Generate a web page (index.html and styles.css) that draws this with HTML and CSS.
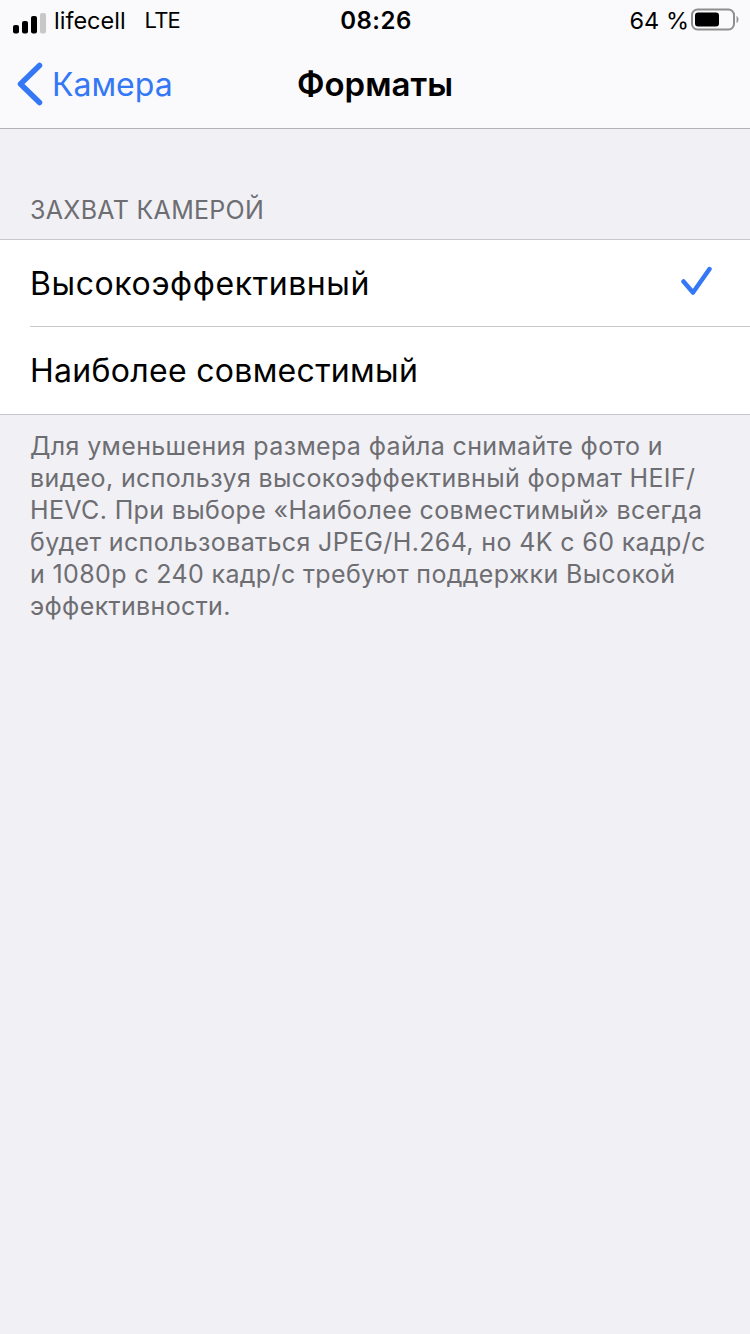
FILE: index.html
```
<!DOCTYPE html>
<html lang="ru">
<head>
<meta charset="utf-8">
<title>Форматы</title>
<link rel="stylesheet" href="styles.css">
</head>
<body>
<header class="top">
  <div class="status">
    <div class="status-left">
      <svg class="signal" width="33" height="32" viewBox="0 0 33 32"><rect x="0" y="21" width="6" height="8.500" rx="2" fill="#000"/><rect x="9" y="17" width="6" height="12.500" rx="2" fill="#000"/><rect x="18" y="12" width="6" height="17.500" rx="2" fill="#000"/><rect x="27" y="9" width="6" height="20.500" rx="2" fill="#c8c8c8"/></svg>
      <span class="carrier">lifecell</span>
      <span class="net">LTE</span>
    </div>
    <div class="time">08:26</div>
    <div class="status-right">
      <span class="pct">64 %</span>
      <svg class="battery" width="48" height="24" viewBox="0 0 48 24"><rect x="1" y="1.500" width="42" height="20" rx="5.500" fill="none" stroke="#8e8e8e" stroke-width="2"/><rect x="4" y="4.500" width="24" height="14" rx="3" fill="#000"/><path d="M45.500 8v7c1.300-.4 2-1.800 2-3.500s-.7-3.100-2-3.500z" fill="#9a9a9a"/></svg>
    </div>
  </div>
  <nav class="nav">
    <div class="back">
      <svg width="28" height="44" viewBox="0 0 28 44"><path d="M23.500 3.500 4.500 22l19 18.500" fill="none" stroke="#3478f6" stroke-width="5.500" stroke-linecap="round" stroke-linejoin="round"/></svg>
      <span>Камера</span>
    </div>
    <h1 class="title">Форматы</h1>
  </nav>
</header>
<main>
  <h2 class="section-head">ЗАХВАТ КАМЕРОЙ</h2>
  <ul class="list">
    <li class="row row-first">
      <span class="label-wide">Высокоэффективный</span>
      <svg class="check" width="34" height="34" viewBox="0 0 34 34"><path d="M3.500 15.500 13 26.500 29.500 3" fill="none" stroke="#3478f6" stroke-width="4.500" stroke-linecap="round" stroke-linejoin="round"/></svg>
    </li>
    <li class="row">
      <span class="label">Наиболее совместимый</span>
    </li>
  </ul>
  <p class="note">Для уменьшения размера файла снимайте фото и<br>видео, используя высокоэффективный формат HEIF/<br>HEVC. При выборе «Наиболее совместимый» всегда<br>будет использоваться JPEG/H.264, но 4K с 60 кадр/с<br>и 1080p с 240 кадр/с требуют поддержки Высокой<br>эффективности.</p>
</main>
</body>
</html>
```
FILE: styles.css
```
* { box-sizing: border-box; }
html, body { margin: 0; padding: 0; }
body {
  width: 750px;
  height: 1334px;
  overflow: hidden;
  background: #f0f0f5;
  color: #000;
  font-family: Inter, "Liberation Sans", sans-serif;
}
.top {
  height: 129px;
  background: #fafafc;
  border-bottom: 1px solid #b2b2b4;
}
.status {
  height: 40px;
  display: grid;
  grid-template-columns: 1fr auto 1fr;
  align-items: center;
  padding: 0 11px 0 13px;
  font-size: 23.500px;
}
.status-left { display: flex; align-items: center; }
.signal { margin-right: 8px; }
.carrier { margin-right: 19px; }
.net { font-size: 22px; letter-spacing: -.8px; }
.time { font-weight: 600; font-size: 24px; letter-spacing: .5px; }
.status-right { display: flex; justify-content: flex-end; align-items: center; gap: 2px; }
.nav {
  height: 88px;
  display: flex;
  align-items: center;
  justify-content: center;
  position: relative;
}
.back {
  position: absolute;
  left: 16px;
  top: 0;
  height: 88px;
  display: flex;
  align-items: center;
  gap: 8px;
  color: #3478f6;
  font-size: 32px;
}
.title { margin: 0; font-size: 33px; font-weight: 600; }
.section-head {
  margin: 0;
  height: 110px;
  padding: 65px 30px 0;
  font-size: 25px;
  line-height: 32px;
  font-weight: 400;
  letter-spacing: .3px;
  color: #6d6d72;
}
.list {
  list-style: none;
  margin: 0;
  padding: 0;
  background: #fff;
  border-top: 1px solid #c8c8cc;
  border-bottom: 1px solid #c8c8cc;
}
.row {
  height: 87px;
  margin-left: 30px;
  padding-right: 36px;
  display: flex;
  align-items: center;
  justify-content: space-between;
  font-size: 32px;
}
.label-wide { letter-spacing: .6px; }
.label { letter-spacing: .3px; }
.row-first { border-bottom: 1px solid #c8c8cc; }
.check { display: block; }
.note {
  margin: 0;
  padding: 15px 30px 0;
  font-size: 25px;
  line-height: 32px;
  letter-spacing: .36px;
  color: #6d6d72;
}
```
